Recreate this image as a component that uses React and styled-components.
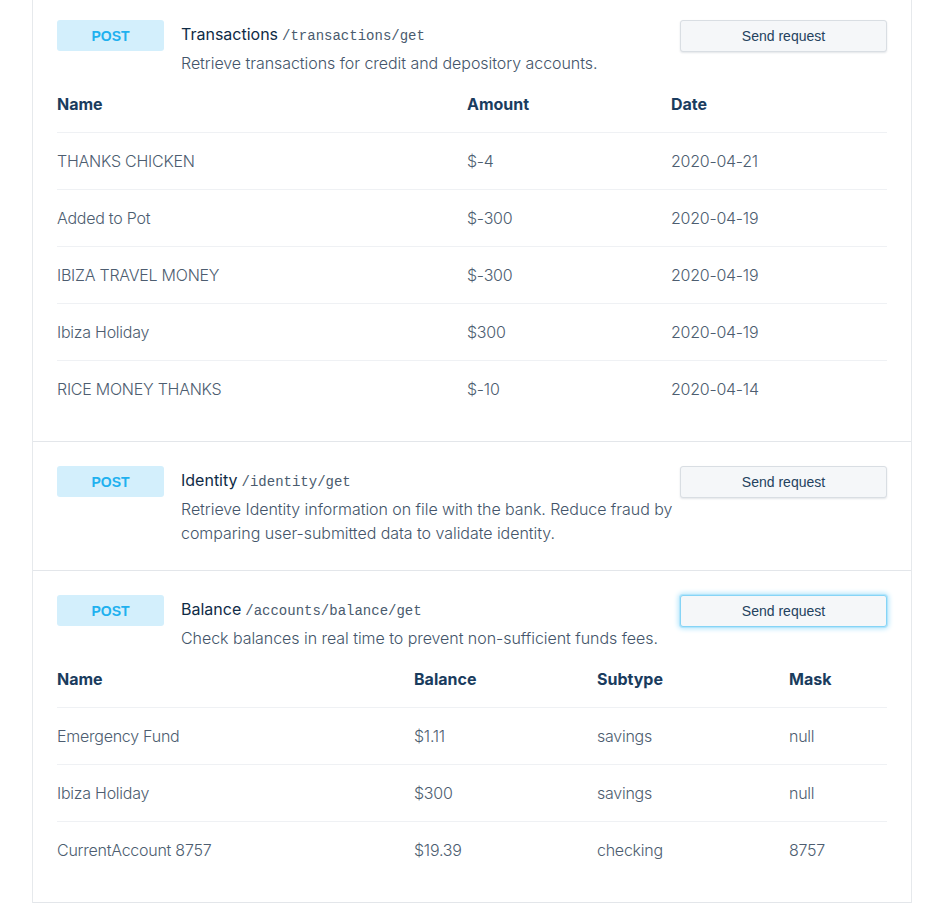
import styled, { createGlobalStyle } from 'styled-components';

const GlobalStyle = createGlobalStyle`
  body {
    margin: 0;
    background: #fff;
    font-family: Inter, 'Noto Sans', sans-serif;
    -webkit-font-smoothing: antialiased;
  }
`;

const Page = styled.div`
  padding: 0 29px 0 32px;
  margin-top: -4px;
`;

const Panel = styled.div`
  border-left: 1px solid #e6e9ec;
  border-right: 1px solid #e6e9ec;
`;

const Endpoint = styled.section`
  padding: 24px 24px ${(p) => (p.$hasTable ? '24px' : '25px')};
  border-bottom: 1px solid #e3e6ea;
`;

const EndpointHeader = styled.div`
  display: flex;
  align-items: flex-start;
`;

const MethodBadge = styled.div`
  width: 107px;
  height: 31px;
  flex-shrink: 0;
  display: flex;
  align-items: center;
  justify-content: center;
  border-radius: 3px;
  background: #d3effc;
  color: #1fb1ef;
  font-family: 'Liberation Sans', Arial, sans-serif;
  font-weight: 700;
  font-size: 14px;
`;

const EndpointInfo = styled.div`
  flex: 1;
  margin-left: 17px;
  padding-top: 2px;
`;

const EndpointTitle = styled.div`
  font-size: 16px;
  line-height: 24px;
  height: 24px;
  color: #0f2b46;
  margin-bottom: 5px;
`;

const EndpointPath = styled.code`
  font-family: 'Liberation Mono', 'Courier New', monospace;
  font-size: 14px;
  line-height: 1;
  color: #4a5b6e;
  margin-left: 4px;
`;

const EndpointDesc = styled.div`
  font-size: 16px;
  font-weight: 300;
  line-height: 24px;
  color: #44556a;
  letter-spacing: -0.05px;
`;

const SendButton = styled.button`
  width: 207px;
  height: 32px;
  flex-shrink: 0;
  border-radius: 3px;
  border: 1px solid ${(p) => (p.$focused ? '#86d4f6' : '#d9dee3')};
  background: #f5f7f9;
  color: #24425e;
  font-family: 'Liberation Sans', Arial, sans-serif;
  font-size: 14px;
  cursor: pointer;
  box-shadow: ${(p) =>
    p.$focused
      ? '0 0 0 1px #b3e5fb, 0 0 5px 2px #b8e7fc'
      : '0 1px 2px rgba(17, 41, 66, 0.12)'};
`;

const Table = styled.div`
  display: grid;
  grid-template-columns: ${(p) => p.$columns};
`;

const Cell = styled.div`
  height: 57px;
  display: flex;
  align-items: center;
  font-size: 16px;
  color: ${(p) => (p.$head ? '#1a3c5e' : '#4d5d70')};
  font-weight: ${(p) => (p.$head ? 700 : 300)};
  letter-spacing: ${(p) => (p.$head ? '0' : '-0.25px')};
  border-top: ${(p) => (p.$divided ? '1px solid #eff1f4' : 'none')};
  box-sizing: border-box;
  white-space: nowrap;
`;

const DataTable = ({ columns, headers, rows }) => (
  <Table $columns={columns}>
    {headers.map((h) => (
      <Cell key={h} $head>
        {h}
      </Cell>
    ))}
    {rows.map((row, i) =>
      row.map((value, j) => (
        <Cell key={`${i}-${j}`} $divided>
          {value}
        </Cell>
      ))
    )}
  </Table>
);

const EndpointBlock = ({ title, path, desc, focused, children }) => (
  <Endpoint $hasTable={!!children}>
    <EndpointHeader>
      <MethodBadge>POST</MethodBadge>
      <EndpointInfo>
        <EndpointTitle>
          {title}
          <EndpointPath>{path}</EndpointPath>
        </EndpointTitle>
        <EndpointDesc>{desc}</EndpointDesc>
      </EndpointInfo>
      <SendButton $focused={focused}>Send request</SendButton>
    </EndpointHeader>
    {children}
  </Endpoint>
);

const transactions = [
  ['THANKS CHICKEN', '$-4', '2020-04-21'],
  ['Added to Pot', '$-300', '2020-04-19'],
  ['IBIZA TRAVEL MONEY', '$-300', '2020-04-19'],
  ['Ibiza Holiday', '$300', '2020-04-19'],
  ['RICE MONEY THANKS', '$-10', '2020-04-14'],
];

const balances = [
  ['Emergency Fund', '$1.11', 'savings', 'null'],
  ['Ibiza Holiday', '$300', 'savings', 'null'],
  ['CurrentAccount 8757', '$19.39', 'checking', '8757'],
];

export default function App() {
  return (
    <>
      <GlobalStyle />
      <Page>
        <Panel>
          <EndpointBlock
            title="Transactions"
            path="/transactions/get"
            desc="Retrieve transactions for credit and depository accounts."
          >
            <DataTable
              columns="410px 204px 1fr"
              headers={['Name', 'Amount', 'Date']}
              rows={transactions}
            />
          </EndpointBlock>
          <EndpointBlock
            title="Identity"
            path="/identity/get"
            desc="Retrieve Identity information on file with the bank. Reduce fraud by comparing user-submitted data to validate identity."
          />
          <EndpointBlock
            title="Balance"
            path="/accounts/balance/get"
            desc="Check balances in real time to prevent non-sufficient funds fees."
            focused
          >
            <DataTable
              columns="357px 183px 192px 1fr"
              headers={['Name', 'Balance', 'Subtype', 'Mask']}
              rows={balances}
            />
          </EndpointBlock>
        </Panel>
      </Page>
    </>
  );
}
